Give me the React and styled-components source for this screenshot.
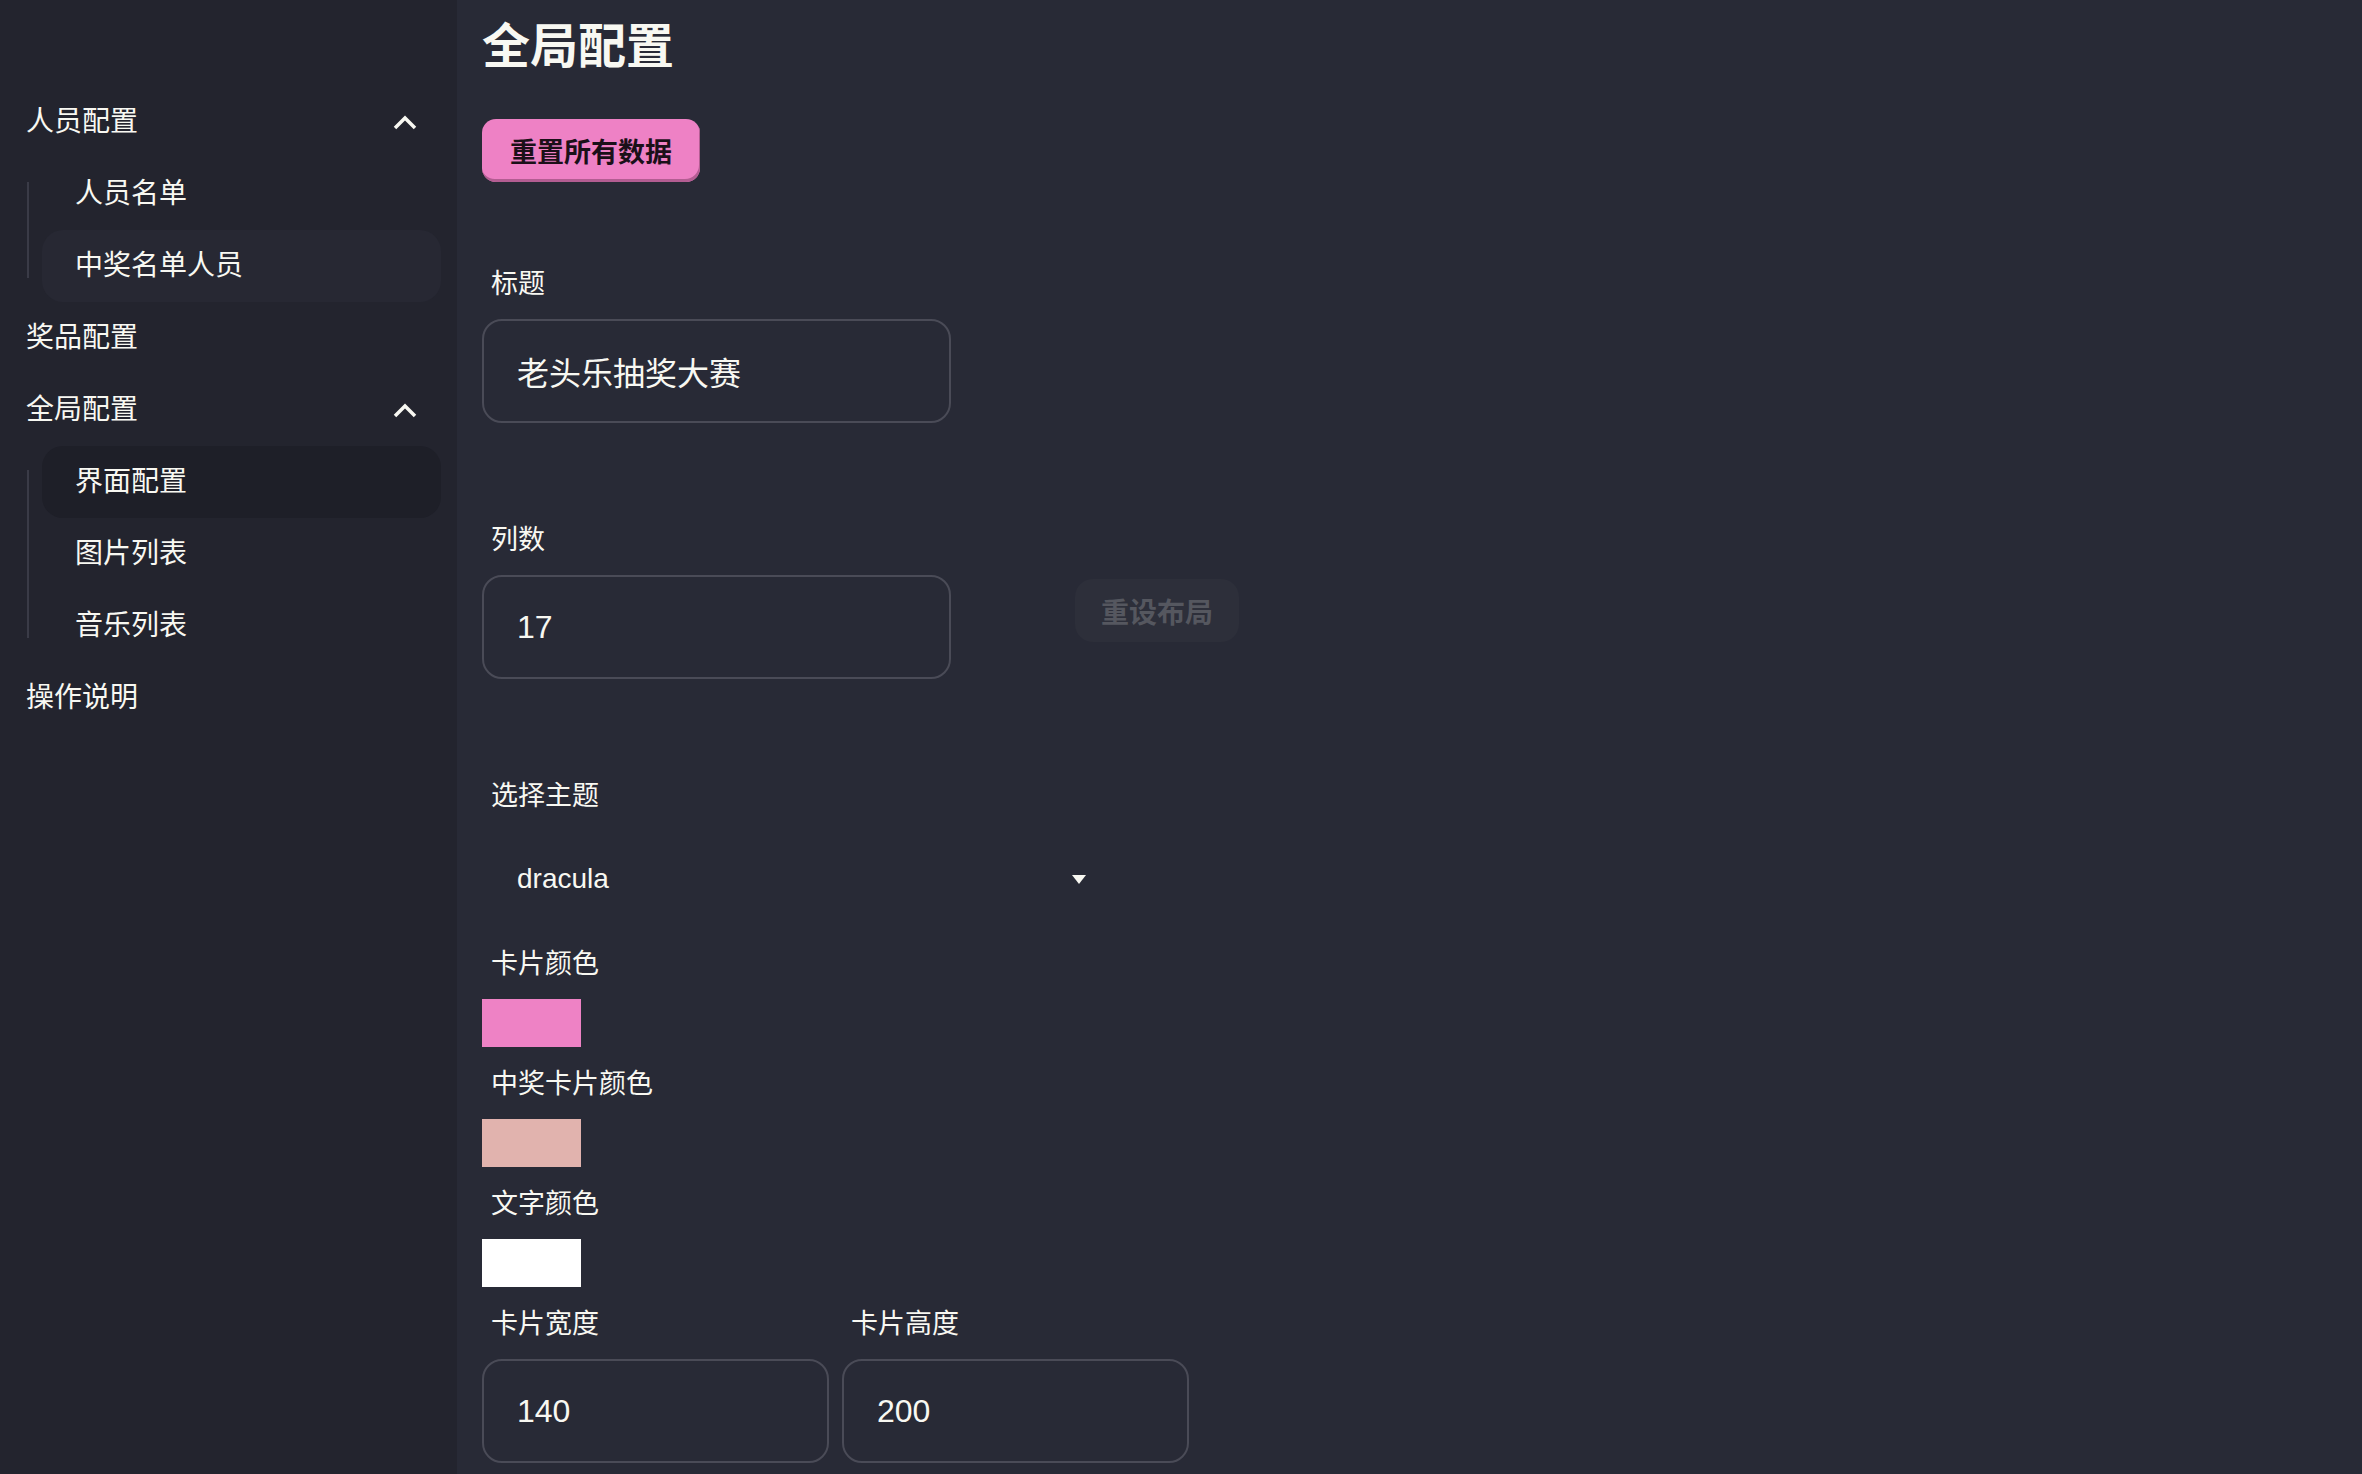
import React from 'react';
import styled, { createGlobalStyle } from 'styled-components';

const GlobalStyle = createGlobalStyle`
  html, body {
    margin: 0;
    padding: 0;
    height: 100%;
    overflow: hidden;
    background: #282a36;
  }
  body {
    font-family: "Liberation Sans", "Noto Sans CJK SC", sans-serif;
    color: #f8f8f2;
  }
  * {
    box-sizing: border-box;
  }
`

const Layout = styled.div`
  display: flex;
  height: 100vh;
`

const Sidebar = styled.aside`
  flex: 0 0 457px;
  background: #23242e;
  padding: 86px 16px 0 14px;
`

const MenuList = styled.ul`
  list-style: none;
  margin: 0;
  padding: 0;
`

const MenuTitle = styled.div`
  height: 72px;
  display: flex;
  align-items: center;
  justify-content: space-between;
  padding: 0 24px 0 12px;
  font-size: 28px;
  line-height: 40px;
  color: #f8f8f2;
`

const SubList = styled.ul`
  position: relative;
  list-style: none;
  margin: 0 0 0 13px;
  padding: 0 0 0 15px;

  &::before {
    content: '';
    position: absolute;
    left: 0;
    top: 24px;
    bottom: 24px;
    width: 2px;
    background: #3a3b47;
  }
`

const SubItem = styled.li`
  height: 72px;
  display: flex;
  align-items: center;
  padding-left: 33px;
  border-radius: 21px;
  font-size: 28px;
  line-height: 40px;
  color: #f8f8f2;
  background: ${p => (p.$active ? '#1e1f28' : p.$hover ? '#272833' : 'transparent')};
`

const Main = styled.main`
  flex: 1;
  padding: 18px 25px 0;
`

const PageTitle = styled.h1`
  margin: 0;
  font-size: 48px;
  line-height: 58px;
  font-weight: 700;
  color: #f8f8f2;
`

const ResetButton = styled.button`
  display: block;
  margin-top: 43px;
  width: 218px;
  height: 63px;
  border: none;
  border-radius: 14px;
  background: #ee81c5;
  box-shadow: inset -1px -3px 0 #b35d92;
  font: inherit;
  font-size: 27px;
  font-weight: 700;
  color: #1b1019;
  padding: 0;
`

const Field = styled.div`
  display: flex;
  flex-direction: column;
  width: ${p => p.$width || 469}px;
  margin-top: ${p => p.$top || 0}px;
`

const Label = styled.label`
  font-size: 27px;
  line-height: 40px;
  padding: 9px 9px 15px;
  color: #f8f8f2;
`

const TextInput = styled.input`
  width: 100%;
  height: 104px;
  border: 2px solid #4a4b57;
  border-radius: 20px;
  background: transparent;
  padding: 0 33px;
  font: inherit;
  font-size: 32px;
  color: #f8f8f2;
  outline: none;
`

const Row = styled.div`
  display: flex;
  align-items: flex-end;
  gap: ${p => p.$gap || 0}px;
  margin-top: ${p => p.$top || 0}px;
`

const GhostButton = styled.button`
  width: 164px;
  height: 63px;
  margin-bottom: 37px;
  border: none;
  border-radius: 18px;
  background: #2d2f3a;
  font: inherit;
  font-size: 28px;
  font-weight: 700;
  color: #55575f;
  padding: 0;
`

const SelectBox = styled.div`
  width: 628px;
  height: 104px;
  display: flex;
  align-items: center;
  justify-content: space-between;
  padding: 0 24px 8px 35px;
  font-size: 28px;
  color: #f8f8f2;
`

const Swatch = styled.div`
  width: 99px;
  height: 48px;
  background: ${p => p.$color};
  margin-bottom: 8px;
`

const Chevron = () => (
  <svg width="24" height="15" viewBox="0 0 24 15">
    <polyline points="2,13 12,3 22,13" fill="none" stroke="#f8f8f2" strokeWidth="3.5" />
  </svg>
)

const Caret = () => (
  <svg width="14" height="9" viewBox="0 0 14 9">
    <polygon points="0,0 14,0 7,9" fill="#f8f8f2" />
  </svg>
)

const colors = [
  { label: '卡片颜色', color: '#ee82c5' },
  { label: '中奖卡片颜色', color: '#e1b3ae' },
  { label: '文字颜色', color: '#ffffff' },
]

export default function App() {
  return (
    <>
      <GlobalStyle />
      <Layout>
        <Sidebar>
          <MenuList>
            <li>
              <MenuTitle>人员配置<Chevron /></MenuTitle>
              <SubList>
                <SubItem>人员名单</SubItem>
                <SubItem $hover>中奖名单人员</SubItem>
              </SubList>
            </li>
            <li><MenuTitle>奖品配置</MenuTitle></li>
            <li>
              <MenuTitle>全局配置<Chevron /></MenuTitle>
              <SubList>
                <SubItem $active>界面配置</SubItem>
                <SubItem>图片列表</SubItem>
                <SubItem>音乐列表</SubItem>
              </SubList>
            </li>
            <li><MenuTitle>操作说明</MenuTitle></li>
          </MenuList>
        </Sidebar>
        <Main>
          <PageTitle>全局配置</PageTitle>
          <ResetButton>重置所有数据</ResetButton>

          <Field $top={73}>
            <Label>标题</Label>
            <TextInput readOnly value="老头乐抽奖大赛" />
          </Field>

          <Row $top={88} $gap={124}>
            <Field>
              <Label>列数</Label>
              <TextInput readOnly value="17" />
            </Field>
            <GhostButton disabled>重设布局</GhostButton>
          </Row>

          <Field $top={88} $width={628}>
            <Label>选择主题</Label>
            <SelectBox>
              <span>dracula</span>
              <Caret />
            </SelectBox>
          </Field>

          {colors.map(item => (
            <Field key={item.label}>
              <Label>{item.label}</Label>
              <Swatch $color={item.color} />
            </Field>
          ))}

          <Row $gap={13}>
            <Field $width={347}>
              <Label>卡片宽度</Label>
              <TextInput readOnly value="140" />
            </Field>
            <Field $width={347}>
              <Label>卡片高度</Label>
              <TextInput readOnly value="200" />
            </Field>
          </Row>
        </Main>
      </Layout>
    </>
  )
}
